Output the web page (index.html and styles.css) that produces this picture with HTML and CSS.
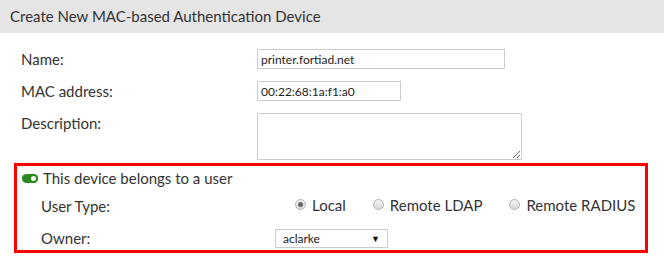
FILE: index.html
```html
<!DOCTYPE html>
<html lang="en">
<head>
  <meta charset="UTF-8">
  <title>Create New MAC-based Authentication Device</title>
  <link rel="stylesheet" href="styles.css">
</head>
<body>
  <div class="dialog-header">Create New MAC-based Authentication Device</div>

  <div class="form">
    <div class="row">
      <label class="label" for="devName">Name:</label>
      <input type="text" id="devName" class="field field-name" value="printer.fortiad.net">
    </div>

    <div class="row">
      <label class="label" for="devMac">MAC address:</label>
      <input type="text" id="devMac" class="field field-mac" value="00:22:68:1a:f1:a0">
    </div>

    <div class="row row-top">
      <label class="label" for="devDesc">Description:</label>
      <textarea id="devDesc" class="field field-desc"></textarea>
    </div>

    <div class="user-box">
      <div class="toggle-row">
        <span class="toggle"><span class="knob"></span></span>
        <span>This device belongs to a user</span>
      </div>

      <div class="sub-row">
        <span class="sub-label">User Type:</span>
        <div class="radios">
          <span class="radio-item"><span class="radio checked"></span>Local</span>
          <span class="radio-item"><span class="radio"></span>Remote LDAP</span>
          <span class="radio-item"><span class="radio"></span>Remote RADIUS</span>
        </div>
      </div>

      <div class="sub-row sub-row-owner">
        <span class="sub-label">Owner:</span>
        <div class="select">
          <span>aclarke</span>
          <span class="arrow">&#9660;</span>
        </div>
      </div>
    </div>
  </div>
</body>
</html>
```

FILE: styles.css
```css
body {
  margin: 0;
  font-family: Lato, "Open Sans", sans-serif;
  font-size: 15px;
  color: #333;
  background: #fff;
}

.dialog-header {
  background: #e5e5e5;
  height: 33px;
  line-height: 32px;
  padding-left: 10px;
  font-size: 15px;
  color: #333;
}

.form {
  padding: 16px 0 0 14px;
}

.row {
  display: flex;
  align-items: center;
  padding-left: 7px;
  margin-bottom: 12px;
}

.row-top {
  align-items: flex-start;
  margin-bottom: 3px;
}

.label {
  width: 236px;
  line-height: 20px;
}

.field {
  box-sizing: border-box;
  border: 1px solid #ccc;
  font-family: Lato, "Open Sans", sans-serif;
  font-size: 12px;
  color: #222;
  padding: 0 3px;
  margin: 0;
  outline: none;
}

.field-name {
  width: 248px;
  height: 20px;
}

.field-mac {
  width: 144px;
  height: 20px;
}

.field-desc {
  width: 265px;
  height: 47px;
}

.user-box {
  width: 634px;
  height: 90px;
  box-sizing: border-box;
  border: 3px solid #f00;
  padding: 3px 5px 0;
}

.toggle-row {
  display: flex;
  align-items: center;
  gap: 5px;
  height: 18px;
}

.toggle {
  display: inline-block;
  position: relative;
  width: 16px;
  height: 9px;
  border-radius: 5px;
  background: #2a8a1e;
}

.toggle .knob {
  position: absolute;
  right: 0;
  top: 0;
  width: 5px;
  height: 5px;
  border-radius: 50%;
  background: #fff;
  border: 2px solid #2a8a1e;
}

.sub-row {
  display: flex;
  align-items: center;
  height: 20px;
  margin-top: 9px;
  padding-left: 19px;
}

.sub-row-owner {
  margin-top: 12px;
}

.sub-label {
  width: 234px;
}

.radios {
  display: flex;
  align-items: center;
  gap: 27px;
  padding-left: 20px;
  margin-top: -3px;
}

.radio-item {
  display: flex;
  align-items: center;
  gap: 6px;
}

.radio {
  display: inline-block;
  width: 9px;
  height: 9px;
  border-radius: 50%;
  border: 1px solid #b5b5b5;
  background: linear-gradient(#f4f4f4, #d8d8d8);
  position: relative;
}

.radio.checked::after {
  content: "";
  position: absolute;
  left: 2px;
  top: 2px;
  width: 5px;
  height: 5px;
  border-radius: 50%;
  background: #666;
}

.select {
  box-sizing: border-box;
  width: 113px;
  height: 19px;
  border: 1px solid #ccc;
  display: flex;
  align-items: center;
  justify-content: space-between;
  padding: 0 7px 0 7px;
  font-size: 12px;
  color: #222;
}

.select .arrow {
  font-size: 9px;
  color: #111;
}
```
